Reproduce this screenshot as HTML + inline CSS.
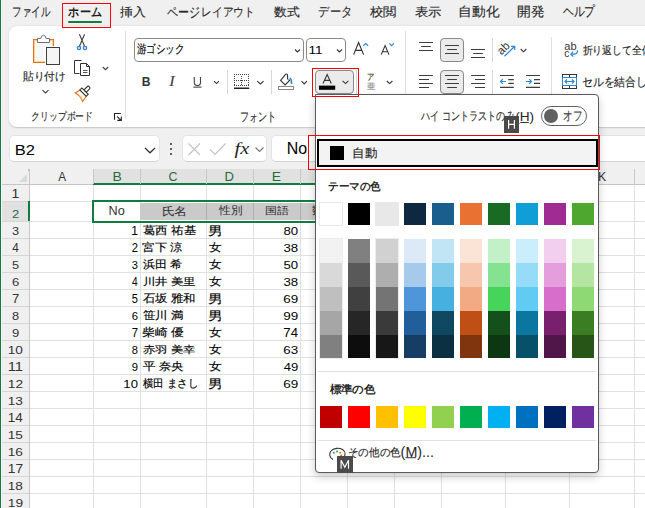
<!DOCTYPE html><html><head><meta charset="utf-8"><style>
*{margin:0;padding:0;box-sizing:border-box}
html,body{width:645px;height:508px;overflow:hidden}
body{position:relative;background:#f0f0f0;font-family:"Liberation Sans",sans-serif;color:#262626}
div{position:absolute}
svg{position:absolute;overflow:visible}
</style></head><body>
<div style="left:68px;top:21px;width:34px;height:2px;background:#107c41;border-radius:1px"></div>
<div style="left:9px;top:26px;width:700px;height:101px;background:#fff;border-radius:8px;box-shadow:0 0.5px 1.5px rgba(0,0,0,0.18)"></div>
<div style="left:125px;top:31px;width:1px;height:88px;background:#e0e0e0"></div>
<div style="left:405px;top:31px;width:1px;height:88px;background:#e0e0e0"></div>
<div style="left:551px;top:37px;width:1px;height:82px;background:#e0e0e0"></div>
<div style="left:134px;top:38px;width:170px;height:24px;border:1px solid #8a8a8a;border-radius:4px;background:#fff"></div>
<div style="left:306px;top:38px;width:40px;height:24px;border:1px solid #8a8a8a;border-radius:4px;background:#fff"></div>
<div style="left:315px;top:70px;width:39px;height:24px;border:1px solid #8a8a8a;border-radius:4px;background:#ebebeb"></div>
<div style="left:440px;top:38px;width:24px;height:24px;border:1px solid #8a8a8a;border-radius:4px;background:#ebebeb"></div>
<div style="left:440px;top:70px;width:24px;height:24px;border:1px solid #8a8a8a;border-radius:4px;background:#ebebeb"></div>
<svg width="645" height="508" style="left:0;top:0"><text x="0" y="0" transform="translate(501.5,55.5) rotate(-45)" style="font-family:'Liberation Sans';font-size:11.5px" fill="#333">ab</text></svg>
<svg width="645" height="508" style="left:0;top:0" fill="none" stroke-linecap="butt">
<!-- paste -->
<rect x="33.5" y="39.5" width="20" height="23" stroke="#e8701f" fill="#f7f7f7"/>
<rect x="34.5" y="40.5" width="18" height="21" stroke="#f6d490"/>
<path d="M37.5,42.5 V38.5 H40.8 Q41.3,35.3 43.5,35.3 Q45.7,35.3 46.2,38.5 H49.5 V42.5 Z" stroke="#6e6e6e" fill="#fff"/>
<rect x="45" y="46" width="16" height="20" fill="#fff"/>
<rect x="46.5" y="47.5" width="13" height="17" stroke="#3d3d3d" fill="#f5f5f5"/>
<path d="M42.5,90.2 L45.5,93 L48.5,90.2" stroke="#424242" stroke-width="1.1"/>
<!-- scissors -->
<path d="M79.4,34.3 L84.6,46.3 M84.6,34.3 L79.4,46.3" stroke="#3d3d3d" stroke-width="1.1"/>
<circle cx="79" cy="48" r="1.7" stroke="#2b88d8" stroke-width="1.2" fill="#d6e9fb"/>
<circle cx="85" cy="48" r="1.7" stroke="#2b88d8" stroke-width="1.2" fill="#d6e9fb"/>
<!-- copy -->
<path d="M81.5,60.5 H74.5 V73.5 H79.5" stroke="#333"/>
<path d="M80.5,63.5 H86.5 L89.5,66.5 V75.5 H80.5 Z" stroke="#333" fill="#fff"/>
<path d="M86.5,63.5 V66.5 H89.5" stroke="#333"/>
<path d="M83,70.5 H87.5 M83,72.5 H87.5" stroke="#555"/>
<path d="M102.8,67 L105.5,69.7 L108.2,67" stroke="#424242" stroke-width="1.1"/>
<!-- format painter -->
<g transform="translate(83.2,93.0) rotate(45)">
<path d="M-4.5,0.2 L-5.6,5.6 Q0,3.8 5.6,6.4 L4.5,0.2 Z" stroke="#e8701f" fill="#fff" stroke-width="1.1"/>
<path d="M-1.2,4.6 L2.8,5.2 L1.2,2.2 Z" fill="#f6d490"/>
<rect x="-4.5" y="-2.6" width="9" height="2.8" stroke="#333" fill="#fff" stroke-width="1.1"/>
<rect x="-1.7" y="-8.8" width="3.4" height="6.2" rx="1.7" stroke="#333" fill="#fff" stroke-width="1.1"/>
</g>
<!-- font name / size chevrons -->
<path d="M295,49.5 L297.5,52 L300,49.5" stroke="#333" stroke-width="1.1"/>
<path d="M337,49.5 L339.5,52 L342,49.5" stroke="#333" stroke-width="1.1"/>
<path d="M353.6,54.6 L358.6,42.6 L363.6,54.6 M355.4,50.4 H361.8" stroke="#333" stroke-width="1.15"/>
<path d="M381.2,54.6 L385.1,45.6 L389,54.6 M382.5,51.8 H387.7" stroke="#333" stroke-width="1.1"/>
<path d="M323,83.6 L327.15,74.6 L331.3,83.6 M324.5,80.4 H329.8" stroke="#333" stroke-width="1.1"/>
<path d="M194.3,77 V82.6 Q194.3,85.6 197.4,85.6 Q200.5,85.6 200.5,82.6 V77" stroke="#444" stroke-width="1.1"/>
<path d="M363.3,45.8 L365.7,43.6 L368.1,45.8" stroke="#2b88d8" stroke-width="1.2"/>
<path d="M389.3,43.4 L391.6,45.6 L393.9,43.4" stroke="#2b88d8" stroke-width="1.2"/>
<!-- underline, chevrons, separators -->
<rect x="193.3" y="86.6" width="8.2" height="1" fill="#333" stroke="none"/>
<path d="M214,81.2 L216.5,83.6 L219,81.2" stroke="#333" stroke-width="1.1"/>
<rect x="227" y="70" width="1" height="24" fill="#d6d6d6" stroke="none"/>
<rect x="271" y="70" width="1" height="24" fill="#d6d6d6" stroke="none"/>
<rect x="356" y="70" width="1" height="24" fill="#d6d6d6" stroke="none"/>
<!-- borders icon -->
<rect x="234" y="84" width="1" height="1" fill="#444" stroke="none"/><rect x="241" y="80" width="1" height="1" fill="#444" stroke="none"/><rect x="246" y="85" width="1" height="1" fill="#444" stroke="none"/><rect x="248" y="76" width="1" height="1" fill="#444" stroke="none"/><rect x="248" y="85" width="1" height="1" fill="#444" stroke="none"/><rect x="248" y="82" width="1" height="1" fill="#444" stroke="none"/><rect x="234" y="74" width="1" height="1" fill="#444" stroke="none"/><rect x="236" y="74" width="1" height="1" fill="#444" stroke="none"/><rect x="234" y="80" width="1" height="1" fill="#444" stroke="none"/><rect x="238" y="74" width="1" height="1" fill="#444" stroke="none"/><rect x="238" y="80" width="1" height="1" fill="#444" stroke="none"/><rect x="236" y="80" width="1" height="1" fill="#444" stroke="none"/><rect x="241" y="76" width="1" height="1" fill="#444" stroke="none"/><rect x="240" y="74" width="1" height="1" fill="#444" stroke="none"/><rect x="240" y="80" width="1" height="1" fill="#444" stroke="none"/><rect x="241" y="82" width="1" height="1" fill="#444" stroke="none"/><rect x="248" y="78" width="1" height="1" fill="#444" stroke="none"/><rect x="248" y="84" width="1" height="1" fill="#444" stroke="none"/><rect x="242" y="74" width="1" height="1" fill="#444" stroke="none"/><rect x="234" y="76" width="1" height="1" fill="#444" stroke="none"/><rect x="244" y="74" width="1" height="1" fill="#444" stroke="none"/><rect x="244" y="80" width="1" height="1" fill="#444" stroke="none"/><rect x="242" y="80" width="1" height="1" fill="#444" stroke="none"/><rect x="234" y="82" width="1" height="1" fill="#444" stroke="none"/><rect x="236" y="85" width="1" height="1" fill="#444" stroke="none"/><rect x="234" y="85" width="1" height="1" fill="#444" stroke="none"/><rect x="241" y="78" width="1" height="1" fill="#444" stroke="none"/><rect x="238" y="85" width="1" height="1" fill="#444" stroke="none"/><rect x="240" y="85" width="1" height="1" fill="#444" stroke="none"/><rect x="241" y="84" width="1" height="1" fill="#444" stroke="none"/><rect x="246" y="74" width="1" height="1" fill="#444" stroke="none"/><rect x="248" y="74" width="1" height="1" fill="#444" stroke="none"/><rect x="248" y="80" width="1" height="1" fill="#444" stroke="none"/><rect x="246" y="80" width="1" height="1" fill="#444" stroke="none"/><rect x="242" y="85" width="1" height="1" fill="#444" stroke="none"/><rect x="244" y="85" width="1" height="1" fill="#444" stroke="none"/><rect x="234" y="78" width="1" height="1" fill="#444" stroke="none"/>
<rect x="234" y="87.5" width="15.2" height="1.5" fill="#222" stroke="none"/>
<path d="M257.2,81.2 L260.4,84 L263.6,81.2" stroke="#333" stroke-width="1.1"/>
<!-- fill color -->
<path d="M287.6,79.6 V75.5 Q287.6,74 286.4,74 Q285.6,74 284.9,75.1 L280.6,80.5 L285.1,85 L289.6,80.5 L288.6,79.5" stroke="#333" stroke-width="1.1" fill="#fff"/>
<path d="M289.6,78.4 Q291.6,78.4 291.6,84" stroke="#2b88d8" stroke-width="1.6"/>
<rect x="278.5" y="86.5" width="15" height="3" stroke="#8a8a8a" fill="#fff"/>
<path d="M301.5,81.2 L304.2,84 L307,81.2" stroke="#333" stroke-width="1.1"/>
<!-- font color -->
<rect x="319" y="85.6" width="16.2" height="4.2" fill="#000" stroke="none"/>
<path d="M342.6,80.8 L345.5,83.6 L348.4,80.8" stroke="#333" stroke-width="1.1"/>
<path d="M386.8,81 L389.6,83.6 L392.4,81" stroke="#333" stroke-width="1.1"/>
<!-- alignment -->
<g stroke="#3d3d3d" stroke-width="1.1">
<path d="M419,42.5 H433 M421.2,46.5 H430.8 M419,50.5 H433"/>
<path d="M445,45.5 H459 M447.2,49.5 H456.9 M445,53.5 H459"/>
<path d="M471,49.5 H485 M473.2,53.5 H482.8 M471,57.5 H485"/>
<path d="M419,75.5 H433 M419,79.5 H429 M419,83.5 H433 M419,87.5 H429"/>
<path d="M445,75.5 H459 M447.2,79.5 H456.9 M445,83.5 H459 M447.2,87.5 H456.9"/>
<path d="M471,75.5 H485 M475,79.5 H485 M471,83.5 H485 M475,87.5 H485"/>
<path d="M500,75.5 H513.8 M508.3,79.6 H513.8 M508.3,83.4 H513.8 M500,87.4 H513.8"/>
<path d="M526,75.5 H540 M534,79.6 H540 M534,83.4 H540 M526,87.4 H540"/>
</g>
<rect x="492" y="38" width="1" height="24" fill="#d6d6d6" stroke="none"/>
<rect x="492" y="70" width="1" height="24" fill="#d6d6d6" stroke="none"/>
<path d="M506,81.5 H500.5 M502.8,79.2 L500.5,81.5 L502.8,83.8" stroke="#2b88d8" stroke-width="1.2"/>
<path d="M526,81.5 H531.5 M529.2,79.2 L531.5,81.5 L529.2,83.8" stroke="#2b88d8" stroke-width="1.2"/>
<!-- orientation -->
<path d="M504.5,56.3 L514.5,46.5 M511,46.3 H514.7 V50" stroke="#2b88d8" stroke-width="1.2"/>
<path d="M520.7,49 L523.5,51.8 L526.3,49" stroke="#333" stroke-width="1.1"/>
<!-- wrap arrow -->
<path d="M577.5,50.3 Q577.8,54.2 573.5,54.2 H570.8 M573.3,51.7 L570.8,54.2 L573.3,56.7" stroke="#2b88d8" stroke-width="1.2"/>
<!-- merge -->
<rect x="562.5" y="74.5" width="14" height="14" stroke="#333" fill="#fff"/>
<path d="M569.5,74.5 V77.5 M569.5,85.5 V88.5" stroke="#333"/>
<rect x="562.5" y="77.5" width="14" height="8" stroke="#2b88d8" fill="#fff"/>
<path d="M565,81.5 H574 M567,79.5 L565,81.5 L567,83.5 M572,79.5 L574,81.5 L572,83.5" stroke="#2b88d8" stroke-width="1.2"/>
<path d="M114.5,119.8 V113.5 H120.8" stroke="#222" stroke-width="1.1"/>
<path d="M117,116.3 L121,120.3 M117.3,120.4 H121.3 V116.4" stroke="#222" stroke-width="1.1"/>
</svg>

<div style="left:9px;top:135px;width:151px;height:26.5px;border:1px solid #e3e3e3;border-bottom-color:#d2d2d2;border-radius:5px;background:#fff"></div>
<div style="left:182px;top:135px;width:85px;height:26.5px;border:1px solid #e3e3e3;border-bottom-color:#d2d2d2;border-radius:5px;background:#fff"></div>
<div style="left:271px;top:135px;width:420px;height:26.5px;border:1px solid #e3e3e3;border-bottom-color:#d2d2d2;border-radius:5px;background:#fff"></div>
<svg width="645" height="508" style="left:0;top:0" fill="none">
<path d="M145,148 L150,152.8 L155,148" stroke="#333" stroke-width="1.2"/>
<circle cx="171" cy="144" r="1" fill="#333"/><circle cx="171" cy="149" r="1" fill="#333"/><circle cx="171" cy="154" r="1" fill="#333"/>
<path d="M188.5,143.5 L200,155 M200,143.5 L188.5,155" stroke="#c2c2c2" stroke-width="1.1"/>
<path d="M210,149.3 L215,154.5 L225.5,143.5" stroke="#c2c2c2" stroke-width="1.1"/>
<path d="M255.5,147.5 L259.5,151.5 L263.5,147.5" stroke="#777" stroke-width="1.1"/>
</svg>

<div style="left:93px;top:169px;width:222px;height:15px;background:#e1e1e1"></div>
<div style="left:598px;top:169px;width:50px;height:15px;background:#f0f0f0"></div>
<div style="left:2px;top:184px;width:91px;height:1px;background:#c6c6c6"></div>
<div style="left:598px;top:184px;width:47px;height:1px;background:#c6c6c6"></div>
<div style="left:93px;top:183px;width:222px;height:2px;background:#107c41"></div>
<div style="left:93px;top:169px;width:1px;height:15px;background:#c8c8c8"></div>
<div style="left:140px;top:169px;width:1px;height:15px;background:#c8c8c8"></div>
<div style="left:206px;top:169px;width:1px;height:15px;background:#c8c8c8"></div>
<div style="left:253px;top:169px;width:1px;height:15px;background:#c8c8c8"></div>
<div style="left:300px;top:169px;width:1px;height:15px;background:#c8c8c8"></div>
<div style="left:347px;top:169px;width:1px;height:15px;background:#c8c8c8"></div>
<div style="left:394px;top:169px;width:1px;height:15px;background:#c8c8c8"></div>
<div style="left:441px;top:169px;width:1px;height:15px;background:#c8c8c8"></div>
<div style="left:505px;top:169px;width:1px;height:15px;background:#c8c8c8"></div>
<div style="left:569px;top:169px;width:1px;height:15px;background:#c8c8c8"></div>
<div style="left:634px;top:169px;width:1px;height:15px;background:#c8c8c8"></div>
<svg width="645" height="508" style="left:0;top:0"><polygon points="27,174 27,182 19,182" fill="#d9d9d9"/><rect x="28.5" y="169.5" width="1.2" height="1.2" fill="#444"/></svg>
<div style="left:30px;top:185px;width:615px;height:323px;background:#fff"></div>
<div style="left:2px;top:185px;width:27px;height:323px;background:#f0f0f0"></div>
<div style="left:2px;top:201px;width:27px;height:20px;background:#e1e1e1"></div>
<div style="left:2px;top:201px;width:27px;height:1px;background:#d6d6d6"></div>
<div style="left:30px;top:201px;width:615px;height:1px;background:#e1e1e1"></div>
<div style="left:2px;top:221px;width:27px;height:1px;background:#d6d6d6"></div>
<div style="left:30px;top:221px;width:615px;height:1px;background:#e1e1e1"></div>
<div style="left:2px;top:238px;width:27px;height:1px;background:#d6d6d6"></div>
<div style="left:30px;top:238px;width:615px;height:1px;background:#e1e1e1"></div>
<div style="left:2px;top:255px;width:27px;height:1px;background:#d6d6d6"></div>
<div style="left:30px;top:255px;width:615px;height:1px;background:#e1e1e1"></div>
<div style="left:2px;top:272px;width:27px;height:1px;background:#d6d6d6"></div>
<div style="left:30px;top:272px;width:615px;height:1px;background:#e1e1e1"></div>
<div style="left:2px;top:289px;width:27px;height:1px;background:#d6d6d6"></div>
<div style="left:30px;top:289px;width:615px;height:1px;background:#e1e1e1"></div>
<div style="left:2px;top:306px;width:27px;height:1px;background:#d6d6d6"></div>
<div style="left:30px;top:306px;width:615px;height:1px;background:#e1e1e1"></div>
<div style="left:2px;top:323px;width:27px;height:1px;background:#d6d6d6"></div>
<div style="left:30px;top:323px;width:615px;height:1px;background:#e1e1e1"></div>
<div style="left:2px;top:340px;width:27px;height:1px;background:#d6d6d6"></div>
<div style="left:30px;top:340px;width:615px;height:1px;background:#e1e1e1"></div>
<div style="left:2px;top:357px;width:27px;height:1px;background:#d6d6d6"></div>
<div style="left:30px;top:357px;width:615px;height:1px;background:#e1e1e1"></div>
<div style="left:2px;top:374px;width:27px;height:1px;background:#d6d6d6"></div>
<div style="left:30px;top:374px;width:615px;height:1px;background:#e1e1e1"></div>
<div style="left:2px;top:391px;width:27px;height:1px;background:#d6d6d6"></div>
<div style="left:30px;top:391px;width:615px;height:1px;background:#e1e1e1"></div>
<div style="left:2px;top:408px;width:27px;height:1px;background:#d6d6d6"></div>
<div style="left:30px;top:408px;width:615px;height:1px;background:#e1e1e1"></div>
<div style="left:2px;top:425px;width:27px;height:1px;background:#d6d6d6"></div>
<div style="left:30px;top:425px;width:615px;height:1px;background:#e1e1e1"></div>
<div style="left:2px;top:442px;width:27px;height:1px;background:#d6d6d6"></div>
<div style="left:30px;top:442px;width:615px;height:1px;background:#e1e1e1"></div>
<div style="left:2px;top:459px;width:27px;height:1px;background:#d6d6d6"></div>
<div style="left:30px;top:459px;width:615px;height:1px;background:#e1e1e1"></div>
<div style="left:2px;top:476px;width:27px;height:1px;background:#d6d6d6"></div>
<div style="left:30px;top:476px;width:615px;height:1px;background:#e1e1e1"></div>
<div style="left:2px;top:493px;width:27px;height:1px;background:#d6d6d6"></div>
<div style="left:30px;top:493px;width:615px;height:1px;background:#e1e1e1"></div>
<div style="left:2px;top:510px;width:27px;height:1px;background:#d6d6d6"></div>
<div style="left:30px;top:510px;width:615px;height:1px;background:#e1e1e1"></div>
<div style="left:93px;top:185px;width:1px;height:323px;background:#e1e1e1"></div>
<div style="left:140px;top:185px;width:1px;height:323px;background:#e1e1e1"></div>
<div style="left:206px;top:185px;width:1px;height:323px;background:#e1e1e1"></div>
<div style="left:253px;top:185px;width:1px;height:323px;background:#e1e1e1"></div>
<div style="left:300px;top:185px;width:1px;height:323px;background:#e1e1e1"></div>
<div style="left:347px;top:185px;width:1px;height:323px;background:#e1e1e1"></div>
<div style="left:394px;top:185px;width:1px;height:323px;background:#e1e1e1"></div>
<div style="left:441px;top:185px;width:1px;height:323px;background:#e1e1e1"></div>
<div style="left:505px;top:185px;width:1px;height:323px;background:#e1e1e1"></div>
<div style="left:569px;top:185px;width:1px;height:323px;background:#e1e1e1"></div>
<div style="left:634px;top:185px;width:1px;height:323px;background:#e1e1e1"></div>
<div style="left:29px;top:169px;width:1px;height:339px;background:#c6c6c6"></div>
<div style="left:28px;top:201px;width:2px;height:20px;background:#107c41"></div>
<div style="left:140px;top:203px;width:175px;height:17px;background:#cacaca"></div>
<div style="left:206px;top:203px;width:1px;height:17px;background:#b0b0b0"></div>
<div style="left:253px;top:203px;width:1px;height:17px;background:#b0b0b0"></div>
<div style="left:300px;top:203px;width:1px;height:17px;background:#b0b0b0"></div>
<div style="left:92px;top:200px;width:223px;height:2px;background:#107c41"></div>
<div style="left:92px;top:221px;width:223px;height:2px;background:#107c41"></div>
<div style="left:92px;top:200px;width:2px;height:23px;background:#107c41"></div>
<div style="left:0px;top:0px;width:1px;height:508px;background:#107c41"></div>
<div style="left:1px;top:0px;width:1px;height:508px;background:#fafafa"></div>
<svg width="645" height="508" style="left:0;top:0">
<text x="12.08" y="16.14" textLength="37.90" lengthAdjust="spacingAndGlyphs" style="font-family:'Liberation Sans';font-size:12.76px;font-weight:normal;font-style:normal" fill="#2b2b2b" stroke="#2b2b2b" stroke-width="0.15">ファイル</text>
<text x="120.17" y="15.99" textLength="25.74" lengthAdjust="spacingAndGlyphs" style="font-family:'Liberation Sans';font-size:12.04px;font-weight:normal;font-style:normal" fill="#2b2b2b" stroke="#2b2b2b" stroke-width="0.15">挿入</text>
<text x="166.87" y="16.69" textLength="33.12" lengthAdjust="spacingAndGlyphs" style="font-family:'Liberation Sans';font-size:14.15px;font-weight:normal;font-style:normal" fill="#2b2b2b" stroke="#2b2b2b" stroke-width="0.15">ページ</text>
<text x="201.33" y="16.26" textLength="53.39" lengthAdjust="spacingAndGlyphs" style="font-family:'Liberation Sans';font-size:11.84px;font-weight:normal;font-style:normal" fill="#2b2b2b" stroke="#2b2b2b" stroke-width="0.15">レイアウト</text>
<text x="273.87" y="16.08" textLength="25.64" lengthAdjust="spacingAndGlyphs" style="font-family:'Liberation Sans';font-size:12.29px;font-weight:normal;font-style:normal" fill="#2b2b2b" stroke="#2b2b2b" stroke-width="0.15">数式</text>
<text x="318.33" y="15.83" textLength="33.78" lengthAdjust="spacingAndGlyphs" style="font-family:'Liberation Sans';font-size:13.11px;font-weight:normal;font-style:normal" fill="#2b2b2b" stroke="#2b2b2b" stroke-width="0.15">データ</text>
<text x="370.00" y="16.08" textLength="26.80" lengthAdjust="spacingAndGlyphs" style="font-family:'Liberation Sans';font-size:12.29px;font-weight:normal;font-style:normal" fill="#2b2b2b" stroke="#2b2b2b" stroke-width="0.15">校閲</text>
<text x="414.60" y="16.19" textLength="26.63" lengthAdjust="spacingAndGlyphs" style="font-family:'Liberation Sans';font-size:12.42px;font-weight:normal;font-style:normal" fill="#2b2b2b" stroke="#2b2b2b" stroke-width="0.15">表示</text>
<text x="458.08" y="16.17" textLength="41.20" lengthAdjust="spacingAndGlyphs" style="font-family:'Liberation Sans';font-size:12.55px;font-weight:normal;font-style:normal" fill="#2b2b2b" stroke="#2b2b2b" stroke-width="0.15">自動化</text>
<text x="517.17" y="16.04" textLength="27.51" lengthAdjust="spacingAndGlyphs" style="font-family:'Liberation Sans';font-size:12.55px;font-weight:normal;font-style:normal" fill="#2b2b2b" stroke="#2b2b2b" stroke-width="0.15">開発</text>
<text x="562.79" y="16.36" textLength="32.50" lengthAdjust="spacingAndGlyphs" style="font-family:'Liberation Sans';font-size:13.65px;font-weight:normal;font-style:normal" fill="#2b2b2b" stroke="#2b2b2b" stroke-width="0.15">ヘルプ</text>
<text x="68.39" y="16.17" textLength="33.38" lengthAdjust="spacingAndGlyphs" style="font-family:'Liberation Sans';font-size:11.90px;font-weight:bold;font-style:normal" fill="#1f1f1f">ホーム</text>
<text x="22.99" y="79.79" textLength="42.56" lengthAdjust="spacingAndGlyphs" style="font-family:'Liberation Sans';font-size:10.61px;font-weight:normal;font-style:normal" fill="#262626" stroke="#262626" stroke-width="0.15">貼り付け</text>
<text x="31.25" y="120.03" textLength="61.76" lengthAdjust="spacingAndGlyphs" style="font-family:'Liberation Sans';font-size:10.51px;font-weight:normal;font-style:normal" fill="#2b2b2b" stroke="#2b2b2b" stroke-width="0.15">クリップボード</text>
<text x="239.92" y="120.50" textLength="36.40" lengthAdjust="spacingAndGlyphs" style="font-family:'Liberation Sans';font-size:13.33px;font-weight:normal;font-style:normal" fill="#2b2b2b" stroke="#2b2b2b" stroke-width="0.15">フォント</text>
<text x="136.61" y="53.35" textLength="47.88" lengthAdjust="spacingAndGlyphs" style="font-family:'Liberation Sans';font-size:11.91px;font-weight:normal;font-style:normal" fill="#000000" stroke="#000000" stroke-width="0.15">游ゴシック</text>
<text x="308.51" y="54.10" textLength="14.15" lengthAdjust="spacingAndGlyphs" style="font-family:'Liberation Sans';font-size:11.74px;font-weight:normal;font-style:normal" fill="#000000">11</text>
<text x="141.85" y="85.90" textLength="8.76" lengthAdjust="spacingAndGlyphs" style="font-family:'Liberation Sans';font-size:13.04px;font-weight:bold;font-style:normal" fill="#333">B</text>
<text x="168.90" y="85.90" textLength="5.85" lengthAdjust="spacingAndGlyphs" style="font-family:'Liberation Serif';font-size:14.92px;font-weight:normal;font-style:italic" fill="#444">I</text>
<text x="367.19" y="80.08" textLength="7.25" lengthAdjust="spacingAndGlyphs" style="font-family:'Liberation Sans';font-size:8.95px;font-weight:normal;font-style:normal" fill="#444" stroke="#444" stroke-width="0.15">ア</text>
<text x="366.83" y="89.12" textLength="8.40" lengthAdjust="spacingAndGlyphs" style="font-family:'Liberation Sans';font-size:8.05px;font-weight:normal;font-style:normal" fill="#8a8a8a" stroke="#8a8a8a" stroke-width="0.15">亜</text>
<text x="564.26" y="49.50" textLength="12.31" lengthAdjust="spacingAndGlyphs" style="font-family:'Liberation Sans';font-size:10.00px;font-weight:normal;font-style:normal" fill="#333">ab</text>
<text x="564.19" y="56.80" textLength="5.12" lengthAdjust="spacingAndGlyphs" style="font-family:'Liberation Sans';font-size:10.36px;font-weight:normal;font-style:normal" fill="#333">c</text>
<text x="582.50" y="54.20" textLength="118.97" lengthAdjust="spacingAndGlyphs" style="font-family:'Liberation Sans';font-size:11.09px;font-weight:normal;font-style:normal" fill="#262626" stroke="#262626" stroke-width="0.15">折り返して全体を表示する</text>
<text x="581.96" y="86.36" textLength="119.33" lengthAdjust="spacingAndGlyphs" style="font-family:'Liberation Sans';font-size:12.14px;font-weight:normal;font-style:normal" fill="#262626" stroke="#262626" stroke-width="0.15">セルを結合して中央揃え</text>
<text x="14.68" y="155.00" textLength="20.20" lengthAdjust="spacingAndGlyphs" style="font-family:'Liberation Sans';font-size:15.00px;font-weight:normal;font-style:normal" fill="#000000">B2</text>
<text x="286.72" y="153.84" textLength="20.39" lengthAdjust="spacingAndGlyphs" style="font-family:'Liberation Sans';font-size:16.29px;font-weight:normal;font-style:normal" fill="#000000">No</text>
<text x="234.60" y="153.58" textLength="14.64" lengthAdjust="spacingAndGlyphs" style="font-family:'Liberation Serif';font-size:16.30px;font-weight:normal;font-style:italic" fill="#222">fx</text>
<text x="58.30" y="180.70" textLength="7.78" lengthAdjust="spacingAndGlyphs" style="font-family:'Liberation Sans';font-size:12.32px;font-weight:normal;font-style:normal" fill="#333">A</text>
<text x="112.48" y="180.70" textLength="9.31" lengthAdjust="spacingAndGlyphs" style="font-family:'Liberation Sans';font-size:12.32px;font-weight:normal;font-style:normal" fill="#1e6b3f">B</text>
<text x="168.58" y="180.58" textLength="8.94" lengthAdjust="spacingAndGlyphs" style="font-family:'Liberation Sans';font-size:11.97px;font-weight:normal;font-style:normal" fill="#1e6b3f">C</text>
<text x="224.46" y="180.70" textLength="9.43" lengthAdjust="spacingAndGlyphs" style="font-family:'Liberation Sans';font-size:12.32px;font-weight:normal;font-style:normal" fill="#1e6b3f">D</text>
<text x="271.89" y="180.70" textLength="9.26" lengthAdjust="spacingAndGlyphs" style="font-family:'Liberation Sans';font-size:12.32px;font-weight:normal;font-style:normal" fill="#1e6b3f">E</text>
<text x="598.02" y="180.70" textLength="8.19" lengthAdjust="spacingAndGlyphs" style="font-family:'Liberation Sans';font-size:12.32px;font-weight:normal;font-style:normal" fill="#333">K</text>
<text x="11.48" y="197.60" textLength="7.76" lengthAdjust="spacingAndGlyphs" style="font-family:'Liberation Sans';font-size:11.88px;font-weight:normal;font-style:normal" fill="#333">1</text>
<text x="11.95" y="217.70" textLength="7.26" lengthAdjust="spacingAndGlyphs" style="font-family:'Liberation Sans';font-size:11.71px;font-weight:normal;font-style:normal" fill="#1e6b3f">2</text>
<text x="12.09" y="234.58" textLength="7.10" lengthAdjust="spacingAndGlyphs" style="font-family:'Liberation Sans';font-size:11.55px;font-weight:normal;font-style:normal" fill="#333">3</text>
<text x="12.36" y="251.82" textLength="6.54" lengthAdjust="spacingAndGlyphs" style="font-family:'Liberation Sans';font-size:12.06px;font-weight:normal;font-style:normal" fill="#333">4</text>
<text x="12.09" y="268.58" textLength="7.10" lengthAdjust="spacingAndGlyphs" style="font-family:'Liberation Sans';font-size:11.71px;font-weight:normal;font-style:normal" fill="#333">5</text>
<text x="11.95" y="285.58" textLength="7.26" lengthAdjust="spacingAndGlyphs" style="font-family:'Liberation Sans';font-size:11.55px;font-weight:normal;font-style:normal" fill="#333">6</text>
<text x="11.95" y="302.82" textLength="7.26" lengthAdjust="spacingAndGlyphs" style="font-family:'Liberation Sans';font-size:12.06px;font-weight:normal;font-style:normal" fill="#333">7</text>
<text x="12.09" y="319.58" textLength="7.10" lengthAdjust="spacingAndGlyphs" style="font-family:'Liberation Sans';font-size:11.55px;font-weight:normal;font-style:normal" fill="#333">8</text>
<text x="11.95" y="336.58" textLength="7.26" lengthAdjust="spacingAndGlyphs" style="font-family:'Liberation Sans';font-size:11.55px;font-weight:normal;font-style:normal" fill="#333">9</text>
<text x="7.76" y="353.58" textLength="15.17" lengthAdjust="spacingAndGlyphs" style="font-family:'Liberation Sans';font-size:11.55px;font-weight:normal;font-style:normal" fill="#333">10</text>
<text x="7.66" y="370.70" textLength="15.40" lengthAdjust="spacingAndGlyphs" style="font-family:'Liberation Sans';font-size:11.88px;font-weight:normal;font-style:normal" fill="#333">11</text>
<text x="7.75" y="387.70" textLength="15.32" lengthAdjust="spacingAndGlyphs" style="font-family:'Liberation Sans';font-size:11.71px;font-weight:normal;font-style:normal" fill="#333">12</text>
<text x="7.76" y="404.58" textLength="15.17" lengthAdjust="spacingAndGlyphs" style="font-family:'Liberation Sans';font-size:11.55px;font-weight:normal;font-style:normal" fill="#333">13</text>
<text x="7.77" y="421.70" textLength="15.02" lengthAdjust="spacingAndGlyphs" style="font-family:'Liberation Sans';font-size:11.88px;font-weight:normal;font-style:normal" fill="#333">14</text>
<text x="7.76" y="438.58" textLength="15.17" lengthAdjust="spacingAndGlyphs" style="font-family:'Liberation Sans';font-size:11.71px;font-weight:normal;font-style:normal" fill="#333">15</text>
<text x="7.76" y="455.58" textLength="15.17" lengthAdjust="spacingAndGlyphs" style="font-family:'Liberation Sans';font-size:11.55px;font-weight:normal;font-style:normal" fill="#333">16</text>
<text x="7.75" y="472.70" textLength="15.32" lengthAdjust="spacingAndGlyphs" style="font-family:'Liberation Sans';font-size:11.88px;font-weight:normal;font-style:normal" fill="#333">17</text>
<text x="7.76" y="489.58" textLength="15.17" lengthAdjust="spacingAndGlyphs" style="font-family:'Liberation Sans';font-size:11.55px;font-weight:normal;font-style:normal" fill="#333">18</text>
<text x="7.75" y="506.58" textLength="15.32" lengthAdjust="spacingAndGlyphs" style="font-family:'Liberation Sans';font-size:11.55px;font-weight:normal;font-style:normal" fill="#333">19</text>
<text x="108.59" y="214.87" textLength="16.20" lengthAdjust="spacingAndGlyphs" style="font-family:'Liberation Sans';font-size:12.86px;font-weight:normal;font-style:normal" fill="#333333">No</text>
<text x="131.23" y="234.75" textLength="6.73" lengthAdjust="spacingAndGlyphs" style="font-family:'Liberation Sans';font-size:12.03px;font-weight:normal;font-style:normal" fill="#000000">1</text>
<text x="142.75" y="234.32" textLength="53.35" lengthAdjust="spacingAndGlyphs" style="font-family:'Liberation Sans';font-size:10.62px;font-weight:normal;font-style:normal" fill="#000000" stroke="#000000" stroke-width="0.15">葛西 祐基</text>
<text x="208.31" y="234.59" textLength="14.69" lengthAdjust="spacingAndGlyphs" style="font-family:'Liberation Sans';font-size:11.91px;font-weight:normal;font-style:normal" fill="#000000" stroke="#000000" stroke-width="0.15">男</text>
<text x="283.47" y="234.63" textLength="14.69" lengthAdjust="spacingAndGlyphs" style="font-family:'Liberation Sans';font-size:11.69px;font-weight:normal;font-style:normal" fill="#000000">80</text>
<text x="131.63" y="251.75" textLength="6.29" lengthAdjust="spacingAndGlyphs" style="font-family:'Liberation Sans';font-size:11.86px;font-weight:normal;font-style:normal" fill="#000000">2</text>
<text x="142.51" y="251.44" textLength="40.36" lengthAdjust="spacingAndGlyphs" style="font-family:'Liberation Sans';font-size:10.52px;font-weight:normal;font-style:normal" fill="#000000" stroke="#000000" stroke-width="0.15">宮下 涼</text>
<text x="208.65" y="251.42" textLength="12.66" lengthAdjust="spacingAndGlyphs" style="font-family:'Liberation Sans';font-size:11.40px;font-weight:normal;font-style:normal" fill="#000000" stroke="#000000" stroke-width="0.15">女</text>
<text x="283.47" y="251.63" textLength="14.69" lengthAdjust="spacingAndGlyphs" style="font-family:'Liberation Sans';font-size:11.69px;font-weight:normal;font-style:normal" fill="#000000">38</text>
<text x="131.76" y="268.63" textLength="6.15" lengthAdjust="spacingAndGlyphs" style="font-family:'Liberation Sans';font-size:11.69px;font-weight:normal;font-style:normal" fill="#000000">3</text>
<text x="142.76" y="268.12" textLength="39.70" lengthAdjust="spacingAndGlyphs" style="font-family:'Liberation Sans';font-size:10.52px;font-weight:normal;font-style:normal" fill="#000000" stroke="#000000" stroke-width="0.15">浜田 希</text>
<text x="208.65" y="268.42" textLength="12.66" lengthAdjust="spacingAndGlyphs" style="font-family:'Liberation Sans';font-size:11.40px;font-weight:normal;font-style:normal" fill="#000000" stroke="#000000" stroke-width="0.15">女</text>
<text x="283.47" y="268.63" textLength="14.69" lengthAdjust="spacingAndGlyphs" style="font-family:'Liberation Sans';font-size:11.69px;font-weight:normal;font-style:normal" fill="#000000">50</text>
<text x="132.00" y="285.87" textLength="5.67" lengthAdjust="spacingAndGlyphs" style="font-family:'Liberation Sans';font-size:12.21px;font-weight:normal;font-style:normal" fill="#000000">4</text>
<text x="142.50" y="285.35" textLength="53.47" lengthAdjust="spacingAndGlyphs" style="font-family:'Liberation Sans';font-size:10.41px;font-weight:normal;font-style:normal" fill="#000000" stroke="#000000" stroke-width="0.15">川井 美里</text>
<text x="208.65" y="285.42" textLength="12.66" lengthAdjust="spacingAndGlyphs" style="font-family:'Liberation Sans';font-size:11.40px;font-weight:normal;font-style:normal" fill="#000000" stroke="#000000" stroke-width="0.15">女</text>
<text x="283.47" y="285.63" textLength="14.69" lengthAdjust="spacingAndGlyphs" style="font-family:'Liberation Sans';font-size:11.69px;font-weight:normal;font-style:normal" fill="#000000">38</text>
<text x="131.76" y="302.63" textLength="6.15" lengthAdjust="spacingAndGlyphs" style="font-family:'Liberation Sans';font-size:11.86px;font-weight:normal;font-style:normal" fill="#000000">5</text>
<text x="142.75" y="302.30" textLength="52.94" lengthAdjust="spacingAndGlyphs" style="font-family:'Liberation Sans';font-size:10.74px;font-weight:normal;font-style:normal" fill="#000000" stroke="#000000" stroke-width="0.15">石坂 雅和</text>
<text x="208.31" y="302.59" textLength="14.69" lengthAdjust="spacingAndGlyphs" style="font-family:'Liberation Sans';font-size:11.91px;font-weight:normal;font-style:normal" fill="#000000" stroke="#000000" stroke-width="0.15">男</text>
<text x="283.33" y="302.63" textLength="14.98" lengthAdjust="spacingAndGlyphs" style="font-family:'Liberation Sans';font-size:11.69px;font-weight:normal;font-style:normal" fill="#000000">69</text>
<text x="131.63" y="319.63" textLength="6.29" lengthAdjust="spacingAndGlyphs" style="font-family:'Liberation Sans';font-size:11.69px;font-weight:normal;font-style:normal" fill="#000000">6</text>
<text x="142.63" y="319.30" textLength="40.67" lengthAdjust="spacingAndGlyphs" style="font-family:'Liberation Sans';font-size:10.74px;font-weight:normal;font-style:normal" fill="#000000" stroke="#000000" stroke-width="0.15">笹川 満</text>
<text x="208.31" y="319.59" textLength="14.69" lengthAdjust="spacingAndGlyphs" style="font-family:'Liberation Sans';font-size:11.91px;font-weight:normal;font-style:normal" fill="#000000" stroke="#000000" stroke-width="0.15">男</text>
<text x="283.33" y="319.63" textLength="14.98" lengthAdjust="spacingAndGlyphs" style="font-family:'Liberation Sans';font-size:11.69px;font-weight:normal;font-style:normal" fill="#000000">99</text>
<text x="131.63" y="336.87" textLength="6.29" lengthAdjust="spacingAndGlyphs" style="font-family:'Liberation Sans';font-size:12.21px;font-weight:normal;font-style:normal" fill="#000000">7</text>
<text x="142.49" y="336.23" textLength="41.51" lengthAdjust="spacingAndGlyphs" style="font-family:'Liberation Sans';font-size:10.52px;font-weight:normal;font-style:normal" fill="#000000" stroke="#000000" stroke-width="0.15">柴崎 優</text>
<text x="208.65" y="336.42" textLength="12.66" lengthAdjust="spacingAndGlyphs" style="font-family:'Liberation Sans';font-size:11.40px;font-weight:normal;font-style:normal" fill="#000000" stroke="#000000" stroke-width="0.15">女</text>
<text x="283.34" y="336.87" textLength="14.69" lengthAdjust="spacingAndGlyphs" style="font-family:'Liberation Sans';font-size:12.21px;font-weight:normal;font-style:normal" fill="#000000">74</text>
<text x="131.76" y="353.63" textLength="6.15" lengthAdjust="spacingAndGlyphs" style="font-family:'Liberation Sans';font-size:11.69px;font-weight:normal;font-style:normal" fill="#000000">8</text>
<text x="142.63" y="353.35" textLength="52.84" lengthAdjust="spacingAndGlyphs" style="font-family:'Liberation Sans';font-size:10.41px;font-weight:normal;font-style:normal" fill="#000000" stroke="#000000" stroke-width="0.15">赤羽 美幸</text>
<text x="208.65" y="353.42" textLength="12.66" lengthAdjust="spacingAndGlyphs" style="font-family:'Liberation Sans';font-size:11.40px;font-weight:normal;font-style:normal" fill="#000000" stroke="#000000" stroke-width="0.15">女</text>
<text x="283.33" y="353.63" textLength="14.83" lengthAdjust="spacingAndGlyphs" style="font-family:'Liberation Sans';font-size:11.69px;font-weight:normal;font-style:normal" fill="#000000">63</text>
<text x="131.63" y="370.63" textLength="6.29" lengthAdjust="spacingAndGlyphs" style="font-family:'Liberation Sans';font-size:11.69px;font-weight:normal;font-style:normal" fill="#000000">9</text>
<text x="142.75" y="370.30" textLength="40.54" lengthAdjust="spacingAndGlyphs" style="font-family:'Liberation Sans';font-size:10.74px;font-weight:normal;font-style:normal" fill="#000000" stroke="#000000" stroke-width="0.15">平 奈央</text>
<text x="208.65" y="370.42" textLength="12.66" lengthAdjust="spacingAndGlyphs" style="font-family:'Liberation Sans';font-size:11.40px;font-weight:normal;font-style:normal" fill="#000000" stroke="#000000" stroke-width="0.15">女</text>
<text x="283.74" y="370.63" textLength="14.55" lengthAdjust="spacingAndGlyphs" style="font-family:'Liberation Sans';font-size:11.69px;font-weight:normal;font-style:normal" fill="#000000">49</text>
<text x="123.35" y="387.63" textLength="14.61" lengthAdjust="spacingAndGlyphs" style="font-family:'Liberation Sans';font-size:11.69px;font-weight:normal;font-style:normal" fill="#000000">10</text>
<text x="142.90" y="387.12" textLength="55.76" lengthAdjust="spacingAndGlyphs" style="font-family:'Liberation Sans';font-size:10.52px;font-weight:normal;font-style:normal" fill="#000000" stroke="#000000" stroke-width="0.15">横田 まさし</text>
<text x="208.31" y="387.59" textLength="14.69" lengthAdjust="spacingAndGlyphs" style="font-family:'Liberation Sans';font-size:11.91px;font-weight:normal;font-style:normal" fill="#000000" stroke="#000000" stroke-width="0.15">男</text>
<text x="283.33" y="387.63" textLength="14.98" lengthAdjust="spacingAndGlyphs" style="font-family:'Liberation Sans';font-size:11.69px;font-weight:normal;font-style:normal" fill="#000000">69</text>
</svg>
<svg width="645" height="508" style="left:0;top:0">
<text x="161.56" y="214.54" textLength="25.91" lengthAdjust="spacingAndGlyphs" style="font-family:'Liberation Sans';font-size:10.53px;font-weight:normal;font-style:normal" fill="#333333" stroke="#333333" stroke-width="0.05">氏名</text>
<text x="218.93" y="214.33" textLength="23.18" lengthAdjust="spacingAndGlyphs" style="font-family:'Liberation Sans';font-size:10.53px;font-weight:normal;font-style:normal" fill="#333333" stroke="#333333" stroke-width="0.05">性別</text>
<text x="264.64" y="214.45" textLength="23.92" lengthAdjust="spacingAndGlyphs" style="font-family:'Liberation Sans';font-size:10.42px;font-weight:normal;font-style:normal" fill="#333333" stroke="#333333" stroke-width="0.05">国語</text>
<text x="311.88" y="214.33" textLength="23.71" lengthAdjust="spacingAndGlyphs" style="font-family:'Liberation Sans';font-size:10.53px;font-weight:normal;font-style:normal" fill="#333333" stroke="#333333" stroke-width="0.05">数学</text>
</svg>
<div style="left:315px;top:94px;width:284px;height:379px;background:#fff;border:1px solid #5a5a5a;border-radius:0 4px 4px 4px;box-shadow:0 4px 9px rgba(0,0,0,0.2)"></div>
<div style="left:541px;top:106px;width:46px;height:20px;border:1px solid #616161;border-radius:10px;background:#fff"></div>
<div style="left:544px;top:109px;width:14px;height:14px;border-radius:50%;background:#616161"></div>
<div style="left:317px;top:139px;width:281px;height:28px;border:2.5px solid #000;background:#f3f3f3"></div>
<div style="left:330px;top:146px;width:14px;height:14px;background:#000"></div>
<div style="left:319px;top:202px;width:24px;height:24px;background:#ffffff;border:1px solid #e8e8e8"></div>
<div style="left:319px;top:238px;width:24px;height:121px;border:1px solid #ececec"></div>
<div style="left:320px;top:239px;width:22px;height:24px;background:#f2f2f2"></div>
<div style="left:320px;top:263px;width:22px;height:24px;background:#d9d9d9"></div>
<div style="left:320px;top:287px;width:22px;height:24px;background:#bfbfbf"></div>
<div style="left:320px;top:311px;width:22px;height:23.5px;background:#a6a6a6"></div>
<div style="left:320px;top:334.5px;width:22px;height:23.5px;background:#808080"></div>
<div style="left:320px;top:406px;width:22px;height:22px;background:#c00000"></div>
<div style="left:348px;top:203px;width:22px;height:22px;background:#000000"></div>
<div style="left:348px;top:239px;width:22px;height:24px;background:#808080"></div>
<div style="left:348px;top:263px;width:22px;height:24px;background:#595959"></div>
<div style="left:348px;top:287px;width:22px;height:24px;background:#404040"></div>
<div style="left:348px;top:311px;width:22px;height:23.5px;background:#262626"></div>
<div style="left:348px;top:334.5px;width:22px;height:23.5px;background:#0d0d0d"></div>
<div style="left:348px;top:406px;width:22px;height:22px;background:#ff0000"></div>
<div style="left:375px;top:202px;width:24px;height:24px;background:#e8e8e8;border:1px solid #e8e8e8"></div>
<div style="left:375px;top:238px;width:24px;height:121px;border:1px solid #ececec"></div>
<div style="left:376px;top:239px;width:22px;height:24px;background:#d1d1d1"></div>
<div style="left:376px;top:263px;width:22px;height:24px;background:#aeaeae"></div>
<div style="left:376px;top:287px;width:22px;height:24px;background:#747474"></div>
<div style="left:376px;top:311px;width:22px;height:23.5px;background:#3a3a3a"></div>
<div style="left:376px;top:334.5px;width:22px;height:23.5px;background:#171717"></div>
<div style="left:376px;top:406px;width:22px;height:22px;background:#ffc000"></div>
<div style="left:404px;top:203px;width:22px;height:22px;background:#0e2841"></div>
<div style="left:404px;top:239px;width:22px;height:24px;background:#dceaf7"></div>
<div style="left:404px;top:263px;width:22px;height:24px;background:#a6caec"></div>
<div style="left:404px;top:287px;width:22px;height:24px;background:#4e95d9"></div>
<div style="left:404px;top:311px;width:22px;height:23.5px;background:#215f9a"></div>
<div style="left:404px;top:334.5px;width:22px;height:23.5px;background:#163e64"></div>
<div style="left:404px;top:406px;width:22px;height:22px;background:#ffff00"></div>
<div style="left:432px;top:203px;width:22px;height:22px;background:#1a5e8e"></div>
<div style="left:432px;top:239px;width:22px;height:24px;background:#c1e5f5"></div>
<div style="left:432px;top:263px;width:22px;height:24px;background:#83cbeb"></div>
<div style="left:432px;top:287px;width:22px;height:24px;background:#46b1e1"></div>
<div style="left:432px;top:311px;width:22px;height:23.5px;background:#104862"></div>
<div style="left:432px;top:334.5px;width:22px;height:23.5px;background:#0b3041"></div>
<div style="left:432px;top:406px;width:22px;height:22px;background:#92d050"></div>
<div style="left:460px;top:203px;width:22px;height:22px;background:#e97132"></div>
<div style="left:460px;top:239px;width:22px;height:24px;background:#fbe3d6"></div>
<div style="left:460px;top:263px;width:22px;height:24px;background:#f6c6ad"></div>
<div style="left:460px;top:287px;width:22px;height:24px;background:#f2aa84"></div>
<div style="left:460px;top:311px;width:22px;height:23.5px;background:#c04f15"></div>
<div style="left:460px;top:334.5px;width:22px;height:23.5px;background:#80350e"></div>
<div style="left:460px;top:406px;width:22px;height:22px;background:#00b050"></div>
<div style="left:488px;top:203px;width:22px;height:22px;background:#196b24"></div>
<div style="left:488px;top:239px;width:22px;height:24px;background:#c2f1c8"></div>
<div style="left:488px;top:263px;width:22px;height:24px;background:#84e291"></div>
<div style="left:488px;top:287px;width:22px;height:24px;background:#47d45a"></div>
<div style="left:488px;top:311px;width:22px;height:23.5px;background:#13501b"></div>
<div style="left:488px;top:334.5px;width:22px;height:23.5px;background:#0d3612"></div>
<div style="left:488px;top:406px;width:22px;height:22px;background:#00b0f0"></div>
<div style="left:516px;top:203px;width:22px;height:22px;background:#0f9ed5"></div>
<div style="left:516px;top:239px;width:22px;height:24px;background:#caeefb"></div>
<div style="left:516px;top:263px;width:22px;height:24px;background:#96dcf8"></div>
<div style="left:516px;top:287px;width:22px;height:24px;background:#61cbf4"></div>
<div style="left:516px;top:311px;width:22px;height:23.5px;background:#0b76a0"></div>
<div style="left:516px;top:334.5px;width:22px;height:23.5px;background:#084f6a"></div>
<div style="left:516px;top:406px;width:22px;height:22px;background:#0070c0"></div>
<div style="left:544px;top:203px;width:22px;height:22px;background:#a02b93"></div>
<div style="left:544px;top:239px;width:22px;height:24px;background:#f2cfee"></div>
<div style="left:544px;top:263px;width:22px;height:24px;background:#e59edd"></div>
<div style="left:544px;top:287px;width:22px;height:24px;background:#d86ecc"></div>
<div style="left:544px;top:311px;width:22px;height:23.5px;background:#78206e"></div>
<div style="left:544px;top:334.5px;width:22px;height:23.5px;background:#501649"></div>
<div style="left:544px;top:406px;width:22px;height:22px;background:#002060"></div>
<div style="left:572px;top:203px;width:22px;height:22px;background:#4ea72e"></div>
<div style="left:572px;top:239px;width:22px;height:24px;background:#d9f2d0"></div>
<div style="left:572px;top:263px;width:22px;height:24px;background:#b4e5a2"></div>
<div style="left:572px;top:287px;width:22px;height:24px;background:#8ed973"></div>
<div style="left:572px;top:311px;width:22px;height:23.5px;background:#3b7d23"></div>
<div style="left:572px;top:334.5px;width:22px;height:23.5px;background:#275417"></div>
<div style="left:572px;top:406px;width:22px;height:22px;background:#7030a0"></div>
<div style="left:318px;top:371px;width:278px;height:1px;background:#e0e0e0"></div>
<div style="left:318px;top:440px;width:278px;height:1px;background:#e0e0e0"></div>
<svg width="645" height="508" style="left:0;top:0">
<text x="421.39" y="119.95" textLength="93.22" lengthAdjust="spacingAndGlyphs" style="font-family:'Liberation Sans';font-size:11.95px;font-weight:normal;font-style:normal" fill="#262626" stroke="#262626" stroke-width="0.15">ハイ コントラストのみ</text>
<text x="515.18" y="120.94" textLength="18.91" lengthAdjust="spacingAndGlyphs" style="font-family:'Liberation Sans';font-size:13.62px;font-weight:normal;font-style:normal" fill="#262626">(H)</text>
<text x="563.34" y="120.38" textLength="19.17" lengthAdjust="spacingAndGlyphs" style="font-family:'Liberation Sans';font-size:13.21px;font-weight:normal;font-style:normal" fill="#424242" stroke="#424242" stroke-width="0.15">オフ</text>
<text x="352.26" y="157.08" textLength="24.92" lengthAdjust="spacingAndGlyphs" style="font-family:'Liberation Sans';font-size:11.70px;font-weight:normal;font-style:normal" fill="#262626" stroke="#262626" stroke-width="0.15">自動</text>
<text x="328.18" y="189.72" textLength="52.72" lengthAdjust="spacingAndGlyphs" style="font-family:'Liberation Sans';font-size:10.62px;font-weight:bold;font-style:normal" fill="#262626">テーマの色</text>
<text x="329.53" y="392.81" textLength="45.87" lengthAdjust="spacingAndGlyphs" style="font-family:'Liberation Sans';font-size:10.62px;font-weight:bold;font-style:normal" fill="#262626">標準の色</text>
<text x="347.97" y="456.14" textLength="52.64" lengthAdjust="spacingAndGlyphs" style="font-family:'Liberation Sans';font-size:10.92px;font-weight:normal;font-style:normal" fill="#262626" stroke="#262626" stroke-width="0.15">その他の色</text>
<text x="400.64" y="457.17" textLength="33.38" lengthAdjust="spacingAndGlyphs" style="font-family:'Liberation Sans';font-size:13.94px;font-weight:normal;font-style:normal" fill="#262626">(M)...</text>
</svg>
<div style="left:504px;top:116px;width:15px;height:17px;background:#4a4a4a"></div>
<svg width="645" height="508" style="left:0;top:0" fill="none"><path d="M333,459.5 C329.5,457.5 328.5,454 331,451 C333.5,448 339,447.5 342.5,449.5 C345,451 345.5,454 344.5,456" stroke="#333" stroke-width="1.1"/><circle cx="333.8" cy="452.8" r="1" fill="#2b88d8"/><circle cx="337" cy="451.6" r="1" fill="#36a03a"/><circle cx="340.2" cy="452.8" r="1" fill="#e8701f"/><circle cx="341.2" cy="455.6" r="1" fill="#e8701f"/><rect x="405.5" y="457.2" width="10.5" height="1" fill="#333"/><rect x="520.3" y="122" width="8.5" height="1" fill="#333"/></svg>
<div style="left:337px;top:456px;width:16px;height:16.5px;background:#4a4a4a"></div>
<svg width="645" height="508" style="left:0;top:0" fill="none" stroke="#fff" stroke-width="1.15"><path d="M508.6,120 V128.8 M514.4,120 V128.8 M508.6,124.4 H514.4"/><path d="M341.1,468.8 V460.2 L344.8,467.2 L348.5,460.2 V468.8" stroke-linejoin="miter"/></svg>
<svg width="645" height="508" style="left:0;top:0">
</svg>
<div style="left:61.8px;top:3px;width:49.4px;height:24.8px;border:1.6px solid #ff0000"></div>
<div style="left:311.8px;top:67.8px;width:47.2px;height:29.2px;border:1.6px solid #ff0000"></div>
<div style="left:307.6px;top:135.4px;width:292px;height:34.5px;border:1.5px solid #ff0000"></div>
</body></html>
